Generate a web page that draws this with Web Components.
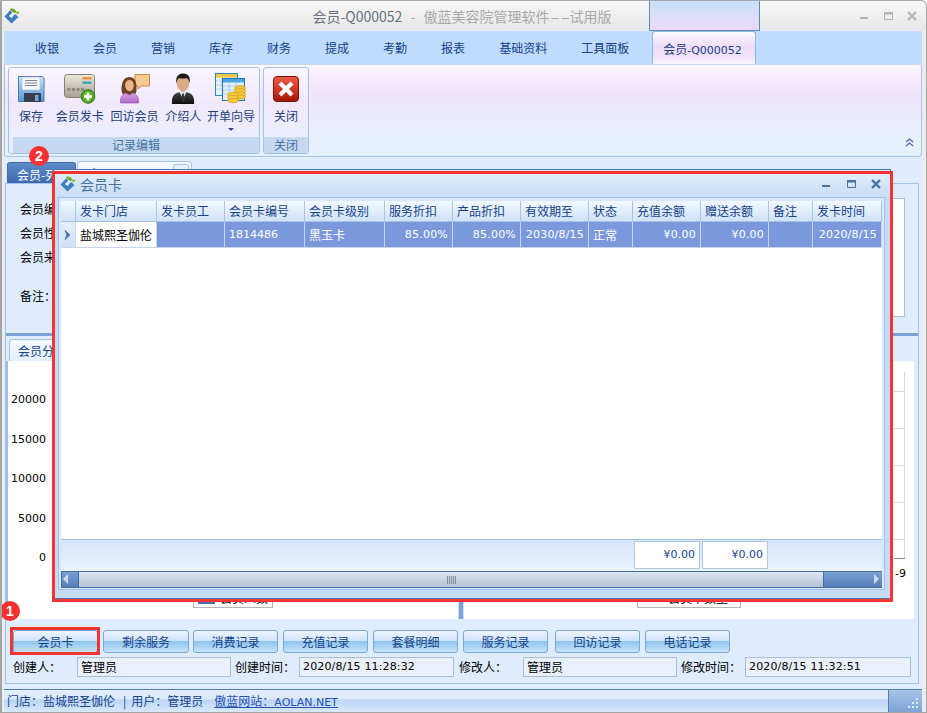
<!DOCTYPE html>
<html lang="zh"><head><meta charset="utf-8"><title>会员-Q000052</title>
<style>
html,body{margin:0;padding:0;background:#fff;overflow:hidden}
body{font:12px/16px "Noto Sans CJK SC","Noto Sans",sans-serif}
</style></head><body>
<app-window></app-window>
<script>
const CJK='"Noto Sans CJK SC","Noto Sans",sans-serif';
const NUM='"DejaVu Sans","Noto Sans CJK SC",sans-serif';
const C='\uFF1A';
function def(name,css,html,init){
  customElements.define(name,class extends HTMLElement{
    connectedCallback(){
      if(this.shadowRoot)return;
      const r=this.attachShadow({mode:'open'});
      r.innerHTML='<style>'+css+'</style>'+(typeof html==='function'?html(this):html);
    }
  });
}
const ICONS={
save:`<svg width="32" height="32" viewBox="0 0 32 32"><defs><linearGradient id="a" x1="0" y1="0" x2="0" y2="1"><stop offset="0" stop-color="#cfe4f9"/><stop offset="1" stop-color="#4f95de"/></linearGradient></defs><path d="M3.500 3.500h24l1.500 1.500v23.500h-25.500z" fill="url(#a)" stroke="#4b78ad" stroke-linejoin="round"/><rect x="7" y="4" width="18" height="13" fill="#f5f7f9" stroke="#9fb3c8" stroke-width=".6"/><path d="M10 7.500h12M10 10h12M10 12.500h12" stroke="#7d8792" stroke-width="1"/><rect x="9" y="20" width="17" height="9" fill="#3b3f4c"/><rect x="20" y="22" width="3.500" height="6" fill="#6ea7de"/></svg>`,
card:`<svg width="32" height="32" viewBox="0 0 32 32"><defs><linearGradient id="b" x1="0" y1="0" x2="0" y2="1"><stop offset="0" stop-color="#ece8da"/><stop offset="1" stop-color="#a5a093"/></linearGradient><radialGradient id="g"><stop offset="0" stop-color="#9ed84a"/><stop offset="1" stop-color="#3f9a1c"/></radialGradient></defs><rect x=".5" y="1.500" width="30" height="23" rx="3" fill="url(#b)" stroke="#85816f"/><rect x="18.500" y="4" width="9" height="2.500" fill="#f09040"/><rect x="18.500" y="8.500" width="9" height="2.500" fill="#3fa7b8"/><path d="M3.500 15h3v3h-3zM8 15h3v3H8zM12.500 15h3v3h-3zM17 15h3v3h-3z" fill="#8d8a7e"/><circle cx="24" cy="23.500" r="6.800" fill="url(#g)" stroke="#2f7d16"/><path d="M24 19.500v8M20 23.500h8" stroke="#fff" stroke-width="2.600"/></svg>`,
visit:`<svg width="32" height="32" viewBox="0 0 32 32"><defs><linearGradient id="c" x1="0" y1="0" x2="0" y2="1"><stop offset="0" stop-color="#dca0e4"/><stop offset="1" stop-color="#b068c8"/></linearGradient></defs><path d="M16 1.500h14.500v11.500h-8l-3.500 3v-3h-3z" fill="#f9c98f" stroke="#c98a4a"/><path d="M2.500 17c0-9 3-13 8-13s7.500 4 7 13c0 2-1 4-2 5H4.500c-1-1-2-3-2-5z" fill="#6e4324"/><ellipse cx="10.500" cy="12.500" rx="4.300" ry="5.800" fill="#e9b48c"/><path d="M1.500 30c-.5-5 1-8.500 5-10l4 2 4-2c4 1.500 5.500 5 5 10z" fill="url(#c)" stroke="#8f55a8" stroke-width=".6"/></svg>`,
man:`<svg width="32" height="32" viewBox="0 0 32 32"><defs><linearGradient id="d" x1="0" y1="0" x2="0" y2="1"><stop offset="0" stop-color="#4a4a4a"/><stop offset="1" stop-color="#0c0c0c"/></linearGradient></defs><path d="M5 31c-.5-6 1-10 6-11.500l5-1 5 1c5 1.500 6.500 5.500 6 11.500z" fill="url(#d)"/><path d="M12.500 19l3.500 7 3.500-7z" fill="#e8e8ea"/><path d="M15.200 20.500h1.600l.7 7-1.500 2-1.500-2z" fill="#30343c"/><ellipse cx="16" cy="10" rx="6.300" ry="8.500" fill="#d9a98a"/><path d="M9.500 11C8 3 12 .500 16.500.500c5 0 7 3.500 6 10-.5-3-1.500-5-3-5.500-3 1-6 .5-7.500 0-1.500 1-2.300 3-2.500 6z" fill="#221a16"/></svg>`,
order:`<svg width="32" height="32" viewBox="0 0 32 32"><rect x=".5" y=".5" width="22" height="22" fill="#eaf3fb" stroke="#2c83cf"/><rect x="1" y="1" width="21" height="3.500" fill="#f5c83c"/><path d="M1 8h21M1 12h21M1 16h21M7 4v18M13 4v18" stroke="#a8cdea" stroke-width=".8"/><rect x="7.500" y="5.500" width="22" height="22" fill="#e4f1fa" stroke="#1f74bd"/><rect x="8" y="6" width="21" height="3.500" fill="#4aa7e0"/><path d="M8 13h21M8 17h21M8 21h21M14 10v17M21 10v17" stroke="#a0c8e6" stroke-width=".8"/><g fill="#f7c93c" stroke="#d39a16" stroke-width=".7"><ellipse cx="25" cy="15" rx="5.500" ry="2.200"/><ellipse cx="25" cy="18" rx="5.500" ry="2.200"/><ellipse cx="25" cy="21" rx="5.500" ry="2.200"/><ellipse cx="25" cy="24" rx="5.500" ry="2.200"/><ellipse cx="18" cy="21.500" rx="5.500" ry="2.200"/><ellipse cx="18" cy="24.500" rx="5.500" ry="2.200"/><ellipse cx="18" cy="27.500" rx="5.500" ry="2.200"/></g></svg>`,
close:`<svg width="32" height="32" viewBox="0 0 32 32"><defs><linearGradient id="e" x1="0" y1="0" x2="0" y2="1"><stop offset="0" stop-color="#ec5a48"/><stop offset=".55" stop-color="#d03524"/><stop offset="1" stop-color="#9a1808"/></linearGradient></defs><rect x="3.500" y="3.500" width="25" height="25" rx="3.500" fill="url(#e)" stroke="#7e1206"/><path d="M10 10l12 12M22 10L10 22" stroke="#fff" stroke-width="4.200"/></svg>`,
};
const LOGO=`<svg width="16" height="16" viewBox="0 0 16 16"><path d="M6.500 2L.5 8.500 7.500 15.500 14.500 9 11 6 7.500 10 5 8 8 5z" fill="#3f7cc0"/><path d="M5 8l2.500 2L9 8.500 7 6.500z" fill="#dbe9f7"/><path d="M6 .500c3.500-.5 6 1 6.500 4-2.500 1-5.500-.5-6.500-4z" fill="#6fae2c"/><path d="M12 4c1-1 2.500-1 3.500 0-.2 1.800-1.800 2.500-3 2z" fill="#8cc63f"/></svg>`;

def('win-buttons',`:host{display:flex;align-items:center}svg{display:block}
`,h=>{const c=h.getAttribute('color');const g=+h.getAttribute('gap');return `<div style="display:flex;gap:${g}px">
<svg width="10" height="10"><rect x="1" y="6" width="8" height="2" fill="${c}"/></svg>
<svg width="10" height="10"><path d="M1.500 1.500h8v7h-8z" fill="none" stroke="${c}"/><rect x="1" y="1" width="9" height="2.500" fill="${c}"/></svg>
<svg width="10" height="10"><path d="M1 1l8 8M9 1L1 9" stroke="${c}" stroke-width="2.400"/></svg></div>`});

def('title-bar',`:host{display:grid;grid-template-columns:1fr auto 1fr;align-items:center;height:29px;background:linear-gradient(#f8f8f8,#e6e6e6);font:14px/20px ${CJK};color:#a9a9a9;box-sizing:border-box;padding:0 9px 0 2px;border-top-right-radius:6px}
.l{height:16px}.t{margin-left:3px;white-space:nowrap}b{font-weight:400;color:#68737f}
.d{margin:0 5px}.dd{display:inline-block;width:20px;transform:scaleX(2.1);transform-origin:0 50%}
win-buttons{justify-self:end}`,
`<div class="l">${LOGO}</div><div class="t"><b>会员-Q000052</b><span class="d"> - </span>傲蓝美容院管理软件<span class="dd">--</span>试用版</div><win-buttons color="#b5b5b5" gap="14"></win-buttons>`);

def('ribbon-tabs',`:host{display:flex;height:33px;padding-left:14px;background:#bfdbff;color:#15428b;font:12px/16px ${CJK};align-items:stretch}
div{padding:9px 17px 0;white-space:nowrap}
.on{margin-left:6px;padding:9px 11px 0;border:1px solid #93b6e0;border-bottom:0;border-radius:3px 3px 0 0;margin-top:0;background:linear-gradient(#fcfaff 0,#f0dcf9 45%,#f0e2fa 75%,#fbf7ff 100%);box-sizing:border-box;width:104px;margin-bottom:-1px;padding-left:10px}
span{font:11px/16px ${NUM}}`,
`<div>收银</div><div>会员</div><div>营销</div><div>库存</div><div>财务</div><div>提成</div><div>考勤</div><div>报表</div><div>基础资料</div><div>工具面板</div><div class="on">会员<span>-Q000052</span></div>`);

def('ribbon-button',`:host{display:flex;flex-direction:column;align-items:center;color:#1e3f7f;font:12px/16px ${CJK};white-space:nowrap}
.i{height:32px;width:32px;margin-top:5px}.i svg{display:block}
.t{margin-top:3px}
.a{width:0;height:0;border:3px solid transparent;border-top:3px solid #2a4a80;border-bottom:0;margin-top:4px}`,
h=>`<div class="i">${ICONS[h.getAttribute('icon')]}</div><div class="t"><slot></slot></div>${h.hasAttribute('arrow')?'<div class="a"></div>':''}`);

def('ribbon-group',`:host{display:flex;flex-direction:column;box-sizing:border-box;height:87px;border:1px solid #a4c2e6;border-radius:3px;background:linear-gradient(#faf6ff,#f1e9fb 40%,#e8effd);overflow:hidden}
.b{flex:1;display:flex;align-items:flex-start}
.l{height:16px;background:#c5d9f0;color:#46719f;font:12px/16px ${CJK};text-align:center}`,
h=>`<div class="b"><slot></slot></div><div class="l">${h.getAttribute('label')}</div>`);

def('ribbon-panel',`:host{display:flex;height:93px;box-sizing:border-box;border:1px solid #a8c6ea;border-top-color:#c4d9f3;border-radius:0 3px 4px 3px;padding:2px 0 0 3px;gap:3px;background:linear-gradient(#fdfaff 0,#f5ecfc 12%,#efe5fa 32%,#e9eefc 70%,#e5f1ff);position:relative}
.c{margin-left:auto;align-self:flex-end;padding:0 7px 9px 0;line-height:0}`,
`<slot></slot><div class="c"><svg width="9" height="9"><path d="M1 4l3.500-3L8 4M1 8l3.500-3L8 8" fill="none" stroke="#3f6ea8" stroke-width="1.300"/></svg></div>`);

def('doc-tabs',`:host{display:flex;height:22px;margin-top:4px;padding-left:3px;gap:1px;font:12px/16px ${CJK};box-sizing:border-box}
.a{width:69px;margin-top:1px;box-sizing:border-box;border-radius:3px 3px 0 0;background:linear-gradient(#5e8ac8,#3f69ac);color:#fff;padding:4px 0 0 9px;border:1px solid #3f6ea8;border-bottom:0;white-space:nowrap}
.b{width:115px;box-sizing:border-box;border:1px solid #a8c6ea;border-bottom:0;border-radius:4px 4px 0 0;background:linear-gradient(#f4f9ff,#e2eefe);color:#15428b;padding:4px 0 0 10px;white-space:nowrap;position:relative}
.b i{position:absolute;right:2px;top:2px;width:14px;height:12px;border:1px solid #a8c6ea;border-radius:2px;background:#e8f1fd}
span{font:11px/16px ${NUM}}`,
`<div class="a">会员-列表</div><div class="b">会员<span>-Q000052</span><i></i></div>`);

def('member-form',`:host{display:flex;height:149px;box-sizing:border-box;padding:14px 13px 16px 14px;font:12px/16px ${CJK};color:#000;background:#dfecfd}
.f{width:50px;display:flex;flex-direction:column;gap:8px;white-space:nowrap;padding-top:3px;flex:none}
.s{margin-top:15px}
.w{flex:1;background:#fff;border:1px solid #a3c2e8}`,
`<div class="f"><div>会员编号${C}</div><div>会员性别${C}</div><div>会员来源${C}</div><div class="s">备注${C}</div></div><div class="w"></div>`);

def('chart-panel',`:host{display:flex;flex-direction:column;flex:none;height:258px;box-sizing:border-box;background:#fff;font:11px/16px ${NUM};color:#000;overflow:hidden;border-left:2px solid #9dbce6;margin-right:4px}
.top{display:flex;height:229px;flex:none}
.ax{width:38px;padding-top:31px;display:flex;flex-direction:column;gap:23.5px;text-align:right;flex:none}
.sp{flex:1}
.r{width:20px;flex:none;padding-top:11px}.r svg{display:block}.r div{margin:6px 0 0 1px;line-height:16px}
.bot{display:flex;flex:1}
.h{flex:1;display:flex;justify-content:center}
.lg{box-sizing:border-box;height:18px;border:1px solid #b5b5b5;border-top:0;padding:0 4px;display:flex;gap:5px;font:12px/16px ${CJK};white-space:nowrap;align-items:flex-start}
.lg i{width:18px;height:14px;background:#4a6fb0;display:block}
.split{width:6px;flex:none;background:#7ba3d8;border:solid #cfe0f5;border-width:0 1px;box-sizing:border-box}`,
`<div class="top"><div class="ax"><div>20000</div><div>15000</div><div>10000</div><div>5000</div><div>0</div></div><div class="sp"></div>
<div class="r"><svg width="12" height="188"><path d="M0 19.500h10M0 56.500h10M0 93.500h10M0 130.500h10M0 167.500h10M10.500 0v186" stroke="#d8d8d8" fill="none"/><path d="M0 186.500h11" stroke="#8a8a8a"/></svg><div>-9</div></div></div>
<div class="bot"><div class="h"><div class="lg" style="width:80px"><i></i>会员人数</div></div><div class="split"></div><div class="h"><div class="lg" style="width:104px;padding-left:30px">会员卡数量</div></div></div>`);

def('lower-tabs',`:host{display:flex;height:25px;padding:3px 0 0 3px;box-sizing:border-box;font:12px/16px ${CJK};color:#15428b;background:#dfecfd}
div{width:70px;border:1px solid #a8c6ea;border-bottom:0;border-radius:4px 0 0 0;background:linear-gradient(#f4f9ff,#e4effe);padding:3px 0 0 8px;white-space:nowrap;box-sizing:border-box}`,
`<div>会员分布</div>`);

def('action-button',`:host{display:block;box-sizing:border-box;height:23px;border:1px solid #7ca8dc;border-radius:3px;background:linear-gradient(#edf5ff 0,#d2e4fb 45%,#90c4ee 50%,#c8e2fa 100%);color:#15428b;font:12px/21px ${CJK};text-align:center;width:var(--w,85px)}`,`<slot></slot>`);

def('info-field',`:host{display:flex;align-items:center;font:12px/18px ${CJK};color:#000;white-space:nowrap;height:20px}
.l{width:var(--lw,64px);flex:none}
.v{box-sizing:border-box;width:var(--fw,154px);height:20px;background:#e9f0fb;border:1px solid #a9bfdc;padding-left:3px;font:12px/18px ${CJK}}
.v.n{font:11px/18px ${NUM};padding-left:3px;letter-spacing:.15px}`,
h=>`<div class="l">${h.getAttribute('label')}</div><div class="v ${h.hasAttribute('num')?'n':''}"><slot></slot></div>`);

def('status-bar',`:host{display:flex;height:23px;box-sizing:border-box;border-top:1px solid #4f7db8;background:linear-gradient(#e4effd 0,#dbe9fb 40%,#bcd6f6 45%,#d8e8fb 100%);color:#15428b;font:12px/22px ${CJK};padding-left:3px;white-space:nowrap}
.s{margin:0 5px 0 8px;color:#15428b}
a{margin-left:11px;color:#2a52b4;text-decoration:underline}a span{font:11px/22px ${NUM}}
.g{margin-left:auto;width:33px;background:linear-gradient(#a8c4e8,#7da3d6);border-left:1px solid #4f7db8;position:relative}
.g svg{position:absolute;right:3px;bottom:3px}`,
`<div>门店${C}盐城熙圣伽伦</div><div class="s">|</div><div>用户${C}管理员</div><a>傲蓝网站${C}<span>AOLAN.NET</span></a>
<div class="g"><svg width="11" height="11" fill="#dfeafa"><path d="M8 0h2v2H8zM4 4h2v2H4zM8 4h2v2H8zM0 8h2v2H0zM4 8h2v2H4zM8 8h2v2H8z"/></svg></div>`);

const COLS='15px 81px 68px 80px 80px 68px 68px 68px 44px 68px 68px 44px 69px';
const HEAD=['','发卡门店','发卡员工','会员卡编号','会员卡级别','服务折扣','产品折扣','有效期至','状态','充值余额','赠送余额','备注','发卡时间'];
const ROW=[['',''],['盐城熙圣伽伦','w'],['',''],['1814486','n'],['黑玉卡',''],['85.00%','nr'],['85.00%','nr'],['2030/8/15','nr'],['正常',''],['¥0.00','nr'],['¥0.00','nr'],['',''],['2020/8/15','nr']];
def('data-grid',`:host{display:flex;flex-direction:column;flex:1;min-height:0;background:#fff;font:12px/16px ${CJK}}
.g{display:grid;grid-template-columns:${COLS};flex:none}
.hd div{height:21px;box-sizing:border-box;background:linear-gradient(#f3f8ff,#cfe2f8);border-right:1px solid #a9c3e3;border-bottom:1px solid #a9c3e3;color:#15428b;padding:2px 0 0 4px;white-space:nowrap;overflow:hidden}
.rw div{height:26px;box-sizing:border-box;background:#7b98dd;color:#fff;border-right:1px solid #c5d6ee;border-bottom:1px solid #c5d6ee;padding:5px 3px 0 4px;white-space:nowrap;overflow:hidden}
.rw .w{background:#fff;color:#000}
.rw .n,.rw .nr{font:11px/16px ${NUM}}.rw .nr{text-align:right;padding-right:4px;padding-left:0;letter-spacing:.2px}
.rw .sel{background:linear-gradient(#e4effd,#cfe0f6);padding:0}
.sel svg{display:block;margin:8px 0 0 3px}
.e{flex:1}
.ft{height:31px;background:linear-gradient(#d6e5fa,#ebf4ff);border-top:1px solid #a3bfe0}
.ft div{margin:1px 1px 2px 1px;background:#fff;border:1px solid #b0c8e6;color:#15428b;font:11px/25px ${NUM};text-align:right;padding-right:4px;grid-row:1}
.ft .x{grid-column:10}.ft .y{grid-column:11}
.sb{display:flex;height:17px;flex:none;box-sizing:border-box;border:solid #3f6ea8;border-width:1px 0 1px 0;background:linear-gradient(#dde6f1,#b3c2d5)}
.sb .bt{background:linear-gradient(#7aa0d2,#577fb8);border-left:1px solid #3f6ea8;position:relative;flex:none}
.sb .t1{width:16px;border-right:1px solid #3f6ea8}.sb .t2{width:58px;border-left:1px solid #3f6ea8}
.sb .bt i{position:absolute;top:2px;border:5px solid transparent;display:block}
.t1 i{left:1px;border-right-color:#cfdcf0!important;border-left:0!important}.t2 i{right:3px;border-left-color:#cfdcf0!important;border-right:0!important}
.tr{flex:1;display:flex;justify-content:center;align-items:center}
.tr svg{display:block}`,
()=>`<div class="g hd">${HEAD.map(t=>`<div>${t}</div>`).join('')}</div>
<div class="g rw">${ROW.map(([t,c],i)=>i===0?`<div class="sel"><svg width="8" height="10"><path d="M1 .5L6 5 1 9.500 3 5z" fill="#4d78b0" stroke="#4d78b0"/></svg></div>`:`<div class="${c}">${t}</div>`).join('')}</div>
<div class="e"></div>
<div class="g ft"><div class="x">¥0.00</div><div class="y">¥0.00</div></div>
<div class="sb"><div class="bt t1"><i></i></div><div class="tr"><svg width="9" height="10"><path d="M.5 1v8M2.500 1v8M4.500 1v8M6.500 1v8M8.500 1v8" stroke="#7f8ea3"/></svg></div><div class="bt t2"><i></i></div></div>`);

def('float-window',`:host{position:absolute;left:51px;top:168px;width:838px;height:430px;box-sizing:border-box;display:flex;flex-direction:column;border:1px solid #4a78b0;background:#c4daf6;z-index:5}
.t{display:flex;align-items:center;height:27px;flex:none;padding:1px 9px 0 6px;box-sizing:border-box;background:linear-gradient(#e4effd,#c8ddf7);color:#46719f;font:14px/16px ${CJK};gap:4px}
.t svg{display:block}.t win-buttons{margin-left:auto}
.b{flex:1;margin:0 5px 8px 4px;border:1px solid #a4c2e8;padding:3px 2px 1px 2px;background:#d9e8fb;display:flex;min-height:0;box-sizing:border-box}`,
`<div class="t">${LOGO}<span>会员卡</span><win-buttons color="#46719f" gap="15"></win-buttons></div><div class="b"><data-grid></data-grid></div>`);

def('mark-badge',`:host{position:absolute;width:20px;height:20px;border-radius:50%;background:#f73131;color:#fff;font:bold 14px/20px "Liberation Sans",sans-serif;text-align:center;z-index:7}`,`<slot></slot>`);
def('mark-box',`:host{position:absolute;box-sizing:border-box;border:3px solid #f53333;z-index:6;pointer-events:none}`,``);

def('app-window',`:host{display:flex;flex-direction:column;position:relative;width:927px;height:713px;box-sizing:border-box;border:solid #a5a5a5;border-width:1px 1px 1px 2px;border-radius:0 6px 0 0;background:#ececec;overflow:hidden;font:12px/16px ${CJK}}
.main{flex:1;display:flex;flex-direction:column;margin:1px 4px 0 2px;background:#e0edfe;min-height:0}
.ctx{position:absolute;left:647px;top:-1px;width:111px;height:31px;box-sizing:border-box;border:1px solid #5c8cc0;border-top:1px solid #4a7ab0;background:linear-gradient(#c6e1fa 0,#dbe0f8 50%,#ecd8f8 100%)}
.pane{flex:1;display:flex;flex-direction:column;margin:0 3px 5px 1px;border:solid #a3c4ec;border-width:1px;border-top-color:#a3c4ec;background:#dfecfd;min-height:0}
.split{height:3px;background:#7ba3d8;flex:none}
.acts{display:flex;gap:5px;padding:11px 0 0 7px;flex:none}
.info{display:flex;gap:4px;padding:4px 0 0 7px;flex:none}
ribbon-button.s{width:36px;margin-right:4px}ribbon-button.m{width:54px;margin-right:1px}ribbon-button.p{width:42px}`,
`<title-bar></title-bar><div class="ctx"></div>
<div class="main">
<ribbon-tabs></ribbon-tabs>
<ribbon-panel>
<ribbon-group label="记录编辑" style="width:252px;padding-left:4px"><ribbon-button class="s" icon="save">保存</ribbon-button><ribbon-button class="m" icon="card">会员发卡</ribbon-button><ribbon-button class="m" icon="visit">回访会员</ribbon-button><ribbon-button class="p" icon="man">介绍人</ribbon-button><ribbon-button class="m" icon="order" arrow>开单向导</ribbon-button></ribbon-group>
<ribbon-group label="关闭" style="width:46px"><ribbon-button icon="close" style="width:44px">关闭</ribbon-button></ribbon-group>
</ribbon-panel>
<doc-tabs></doc-tabs>
<div class="pane">
<member-form></member-form><div class="split"></div>
<lower-tabs></lower-tabs><chart-panel></chart-panel>
<div class="acts">
<action-button>会员卡</action-button><action-button style="--w:86px;margin-right:-1px">剩余服务</action-button><action-button>消费记录</action-button><action-button>充值记录</action-button><action-button>套餐明细</action-button><action-button>服务记录</action-button><action-button style="margin-left:2px">回访记录</action-button><action-button>电话记录</action-button>
</div>
<div class="info">
<info-field label="创建人${C}">管理员</info-field>
<info-field label="创建时间${C}" num style="--fw:155px">2020/8/15 11:28:32</info-field>
<info-field label="修改人${C}" style="margin-left:1px">管理员</info-field>
<info-field label="修改时间${C}" num style="--fw:166px">2020/8/15 11:32:51</info-field>
</div>
</div>
<status-bar></status-bar>
</div>
<float-window></float-window>
<mark-box style="left:50px;top:170px;width:841px;height:431px"></mark-box>
<mark-box style="left:8px;top:626px;width:90px;height:28px"></mark-box>
<mark-badge style="left:27px;top:145px">2</mark-badge>
<mark-badge style="left:-2px;top:600px">1</mark-badge>`);
</script>
</body></html>
